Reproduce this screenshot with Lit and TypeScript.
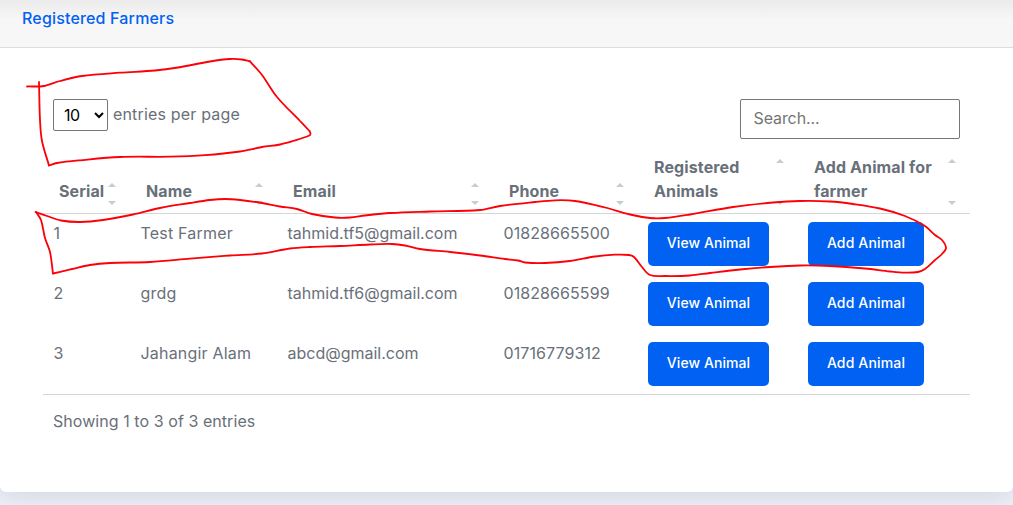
import { LitElement, html, css, svg } from "lit";
import { customElement, property } from "lit/decorators.js";

type Point = [number, number];

/** Draws a smooth stroke through a list of points. */
function stroke(points: Point[]): string {
  let d = `M${points[0][0]} ${points[0][1]}`;
  for (let i = 0; i < points.length - 1; i++) {
    const p0 = points[Math.max(0, i - 1)];
    const p1 = points[i];
    const p2 = points[i + 1];
    const p3 = points[Math.min(points.length - 1, i + 2)];
    const length = Math.hypot(p2[0] - p1[0], p2[1] - p1[1]);
    const inner = length / (3 * Math.hypot(p2[0] - p0[0], p2[1] - p0[1]));
    const outer = length / (3 * Math.hypot(p3[0] - p1[0], p3[1] - p1[1]));
    d += `C${p1[0] + (p2[0] - p0[0]) * inner} ${p1[1] + (p2[1] - p0[1]) * inner} ${p2[0] - (p3[0] - p1[0]) * outer} ${p2[1] - (p3[1] - p1[1]) * outer} ${p2[0]} ${p2[1]}`;
  }
  return d;
}

const STROKES: Point[][] = [
  [[27, 86.5], [44, 86], [60, 81], [82, 76], [120, 72.7], [155, 70.5], [178, 67.5], [210, 61.5], [230, 59], [242, 59.5], [250, 61.3]],
  [[250, 61.3], [262, 75], [277, 97], [300, 121], [309.5, 131]],
  [[309.5, 131], [310.5, 133.5], [309.5, 135.5], [293, 141], [280, 144.5], [262, 147], [240, 151.5], [205, 155.2], [170, 156.7], [120, 157], [80, 160.3], [57, 163], [49, 165.5]],
  [[49, 165.5], [42, 141], [40, 120], [39, 82]],
  [[35.5, 212], [47, 216], [61, 220.5], [80, 222], [103, 220], [133, 214.5], [160, 208], [190, 203], [210, 200], [225, 199], [240, 200], [262, 203], [280, 206.5], [297, 209], [312, 214], [335, 217.5], [350, 217.5], [365, 215.5], [390, 213], [430, 211.5], [480, 210], [500, 206], [535, 202], [555, 200.3], [575, 201], [605, 207.5], [630, 214.5], [650, 218], [665, 218], [690, 214.5], [733, 207], [773, 202.5], [800, 201], [830, 201.5], [853, 204], [880, 208.5], [905, 216], [925, 226], [935, 235], [942, 240], [946, 248], [942, 254], [935, 260], [925, 269], [918, 272], [905, 272.7], [890, 271.5], [865, 268.5], [830, 266], [800, 265.5], [770, 267], [740, 269.5], [710, 273], [690, 275.5], [665, 276], [650, 275], [642, 267], [634, 257], [629, 255], [615, 254.7], [595, 256.5], [570, 261], [545, 263], [525, 262.5], [518, 260.5], [505, 259], [480, 255.5], [450, 252], [420, 249], [405, 245.5], [392, 244], [370, 244.5], [340, 246], [310, 247], [290, 248.5], [262, 253.5], [230, 255.5], [190, 258.7], [150, 262], [110, 263], [90, 265], [72, 269], [53, 273.5]],
  [[53, 273.5], [50, 252], [45, 238], [41, 220], [36, 212]],
];

interface Column {
  lines: string[];
}

const COLUMNS: Column[] = [
  { lines: ["Serial"] },
  { lines: ["Name"] },
  { lines: ["Email"] },
  { lines: ["Phone"] },
  { lines: ["Registered", "Animals"] },
  { lines: ["Add Animal for", "farmer"] },
];

const FARMERS = [
  { id: 1, name: "Test Farmer", email: "tahmid.tf5@gmail.com", phone: "01828665500" },
  { id: 2, name: "grdg", email: "tahmid.tf6@gmail.com", phone: "01828665599" },
  { id: 3, name: "Jahangir Alam", email: "abcd@gmail.com", phone: "01716779312" },
];

@customElement("sort-header")
export class SortHeader extends LitElement {
  @property({ attribute: false }) lines: string[] = [];

  static styles = css`
    :host {
      display: flex;
      justify-content: space-between;
      align-self: end;
      padding: 0 14px 10px 16px;
    }
    .label {
      font-weight: 700;
      letter-spacing: 0.12px;
      white-space: nowrap;
    }
    .line {
      display: block;
      height: 24px;
    }
    .arrows {
      display: flex;
      flex-direction: column;
      justify-content: space-between;
      width: 8px;
      margin: 4px 0 -2px;
      color: #c9cbcd;
    }
    .arrow {
      display: block;
      width: 8px;
      height: 4px;
      fill: currentColor;
    }
  `;

  render() {
    return html`
      <span class="label">${this.lines.map((l) => html`<span class="line">${l}</span>`)}</span>
      <span class="arrows">
        <svg class="arrow" viewBox="0 0 8 4"><path d="M0 4L4 0L8 4Z" /></svg>
        <svg class="arrow" viewBox="0 0 8 4"><path d="M0 0L4 4L8 0Z" /></svg>
      </span>
    `;
  }
}

@customElement("app-root")
export class AppRoot extends LitElement {
  static styles = css`
    :host {
      display: block;
      position: relative;
      height: 505px;
      overflow: hidden;
      background: #edf0f9;
      font: 16px/24px Inter, "Noto Sans", sans-serif;
      color: #69707a;
    }
    * {
      box-sizing: border-box;
    }
    .card {
      height: 492px;
      background: #fff;
      border-radius: 0 0 6px 6px;
      box-shadow: 0 2px 28px rgba(33, 40, 50, 0.15);
    }
    .card-header {
      height: 48px;
      padding: 6px 22px;
      border-bottom: 1px solid #dcdddf;
      background: linear-gradient(#ebebeb, #f7f7f7 20px);
      color: #0061f2;
      font-weight: 500;
      letter-spacing: 0.17px;
    }
    .toolbar {
      display: flex;
      justify-content: space-between;
      height: 107px;
      padding: 51px 53px 0;
    }
    .entries {
      display: flex;
      gap: 5px;
      height: 32px;
      line-height: 31px;
      letter-spacing: 0.17px;
    }
    .select {
      display: flex;
      align-items: center;
      justify-content: space-between;
      width: 55px;
      height: 32px;
      padding: 0 3px 0 10px;
      border: 1px solid #767676;
      border-radius: 2px;
      color: #000;
      letter-spacing: -0.5px;
    }
    .chevron {
      width: 10px;
      height: 7px;
      fill: none;
      stroke: #000;
      stroke-width: 2;
    }
    .search {
      width: 220px;
      height: 40px;
      padding: 0 12.5px 2px;
      border: 1px solid #767676;
      border-radius: 2px;
      background: #fff;
      font: inherit;
      letter-spacing: -0.1px;
      outline: none;
    }
    .search::placeholder {
      color: #757575;
      opacity: 1;
    }
    .table {
      margin: 0 43px;
      border-bottom: 1px solid #d5d6d8;
    }
    .row {
      display: grid;
      grid-template-columns: 87px 147px 216px 145px 160px 172px;
      height: 60px;
    }
    .head {
      height: 59px;
      border-bottom: 1px solid #d5d6d8;
    }
    .cell {
      padding: 7px 0 8px 10.5px;
      white-space: nowrap;
    }
    .name {
      letter-spacing: 0.2px;
    }
    .phone {
      letter-spacing: 0.08px;
    }
    .action {
      padding: 8px 0 8px 10px;
    }
    .button {
      display: block;
      height: 44px;
      width: 121px;
      padding: 0 0 2px;
      border: 0;
      border-radius: 5px;
      background: #0061f2;
      color: #fff;
      font: 500 14px/42px Inter, sans-serif;
      letter-spacing: 0.08px;
    }
    .add {
      width: 116px;
      letter-spacing: 0.16px;
    }
    .info {
      padding: 14px 53px;
      letter-spacing: 0.06px;
    }
    .marker {
      position: absolute;
      inset: 0;
      width: 1013px;
      height: 505px;
      fill: none;
      stroke: #fb0007;
      stroke-width: 1.8;
      stroke-linecap: round;
      stroke-linejoin: round;
      pointer-events: none;
    }
  `;

  render() {
    return html`
      <section class="card">
        <header class="card-header">Registered Farmers</header>
        <div class="toolbar">
          <div class="entries">
            <span class="select">
              <span>10</span>
              <svg class="chevron" viewBox="0 0 10 7"><path d="M1 1L5 5L9 1" /></svg>
            </span>
            <span>entries per page</span>
          </div>
          <input class="search" type="search" placeholder="Search..." />
        </div>
        <div class="table">
          <div class="row head">
            ${COLUMNS.map((c) => html`<sort-header .lines=${c.lines}></sort-header>`)}
          </div>
          ${FARMERS.map(
            (f) => html`
              <div class="row">
                <span class="cell">${f.id}</span>
                <span class="cell name">${f.name}</span>
                <span class="cell">${f.email}</span>
                <span class="cell phone">${f.phone}</span>
                <span class="action"><button class="button">View Animal</button></span>
                <span class="action"><button class="button add">Add Animal</button></span>
              </div>
            `
          )}
        </div>
        <div class="info">Showing 1 to 3 of 3 entries</div>
      </section>
      <svg class="marker" viewBox="0 0 1013 505">${STROKES.map((s) => svg`<path d=${stroke(s)} />`)}</svg>
    `;
  }
}
